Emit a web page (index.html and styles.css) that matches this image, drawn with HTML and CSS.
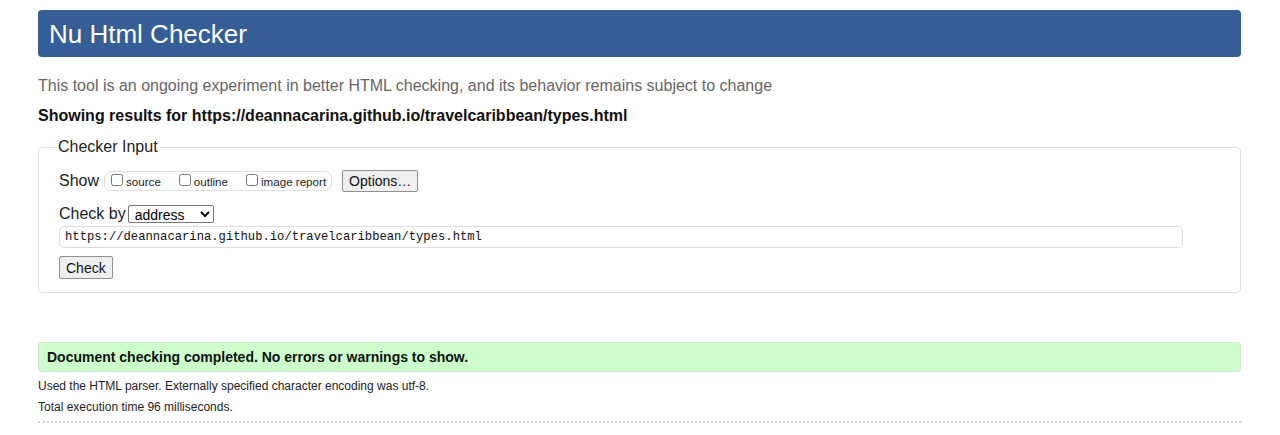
FILE: index.html
```html
<!DOCTYPE html>
<html lang="en">
<head>
    <meta charset="UTF-8">
    <meta name="viewport" content="width=device-width, initial-scale=1.0">
    <title>Nu Html Checker</title>
    <link rel="stylesheet" href="styles.css">
</head>
<body>

    <h1 class="title">Nu Html Checker</h1>
    <p class="intro">This tool is an ongoing experiment in better HTML checking, and its behavior remains subject to change</p>
    <h2 class="results">Showing results for https://deannacarina.github.io/travelcaribbean/types.html</h2>

    <form class="checker">
        <fieldset class="input-box">
            <legend>Checker Input</legend>

            <div class="row show-row">
                <span class="label">Show</span>
                <fieldset class="show-group">
                    <label><input type="checkbox"> source</label>
                    <label><input type="checkbox"> outline</label>
                    <label><input type="checkbox"> image report</label>
                </fieldset>
                <button type="button" class="btn">Options…</button>
            </div>

            <div class="row by-row">
                <span class="label">Check by</span>
                <select class="by-select">
                    <option>address</option>
                </select>
            </div>

            <input type="text" class="url" value="https://deannacarina.github.io/travelcaribbean/types.html">

            <div class="row submit-row">
                <button type="button" class="btn">Check</button>
            </div>
        </fieldset>
    </form>

    <p class="success">Document checking completed. No errors or warnings to show.</p>
    <p class="details first">Used the HTML parser. Externally specified character encoding was utf-8.</p>
    <p class="details">Total execution time 96 milliseconds.</p>
    <hr class="sep">

</body>
</html>
```

FILE: styles.css
```css
* {
    box-sizing: border-box;
}

body {
    margin: 0;
    padding: 10px 39px 0 38px;
    background-color: white;
    color: #222;
    font-family: "Liberation Sans", Arial, sans-serif;
    font-size: 16px;
}

.title {
    margin: 0;
    height: 47px;
    padding: 0 11px;
    line-height: 49px;
    background-color: #365e96;
    color: white;
    font-size: 26px;
    font-weight: normal;
    border-radius: 4px;
}

.intro {
    margin: 19px 0 0;
    line-height: 20px;
    color: #666;
}

.results {
    margin: 10px 0 0;
    line-height: 20px;
    font-size: 16px;
    font-weight: bold;
    color: #111;
}

.checker {
    margin: 12px 0 0;
}

.input-box {
    margin: 0;
    padding: 10px 57px 13px 20px;
    border: 1px solid #e0e0e0;
    border-radius: 4px;
}

.input-box legend {
    padding: 0 2px;
    margin-left: -3px;
    font-size: 16px;
    color: #222;
}

.row {
    display: flex;
    align-items: center;
}

.label {
    font-size: 16px;
    margin-right: 3px;
}

.show-row {
    margin-top: 4px;
}

.show-group {
    display: flex;
    align-items: center;
    gap: 16px;
    margin: 0 10px 0 2px;
    padding: 0 5px 0 4px;
    height: 20px;
    border: 1px solid #e0e0e0;
    border-radius: 7px;
}

.show-group label {
    display: flex;
    align-items: center;
    font-size: 11.6px;
    color: #222;
}

.show-group input {
    margin: 0 3px 2px 2px;
    width: 12px;
    height: 12px;
}

.btn {
    font-family: "Liberation Sans", Arial, sans-serif;
    font-size: 14px;
    height: 22px;
    padding: 0 6px;
    background-color: #efefef;
    border: 1px solid #8f8f8f;
    border-radius: 2px;
    color: #111;
}

.by-row {
    margin-top: 13px;
}

.by-select {
    width: 86px;
    height: 18px;
    margin-left: -1px;
    font-family: "Liberation Sans", Arial, sans-serif;
    font-size: 14px;
    padding: 0 2px;
    border: 1px solid #777;
    border-radius: 2px;
    background-color: white;
}

.url {
    display: block;
    width: 100%;
    height: 22px;
    margin-top: 3px;
    padding: 0 5px;
    font-family: "Liberation Mono", "Courier New", monospace;
    font-size: 12.2px;
    color: #111;
    border: 1px solid #ddd;
    border-radius: 5px;
}

.submit-row {
    margin-top: 8px;
}

.submit-row .btn {
    height: 23px;
}

.success {
    margin: 49px 0 0;
    height: 30px;
    padding: 0 8px;
    line-height: 29px;
    background-color: #ccffcc;
    border: 1px solid #d6e6d6;
    border-radius: 4px;
    font-size: 14px;
    font-weight: bold;
    color: #111;
}

.details {
    margin: 6px 0 0;
    font-size: 12px;
    line-height: 15px;
    color: #222;
}

.details.first {
    margin-top: 7px;
}

.sep {
    margin: 6px 0 0;
    border: 0;
    border-top: 2px dotted #d4d4d4;
}
```
